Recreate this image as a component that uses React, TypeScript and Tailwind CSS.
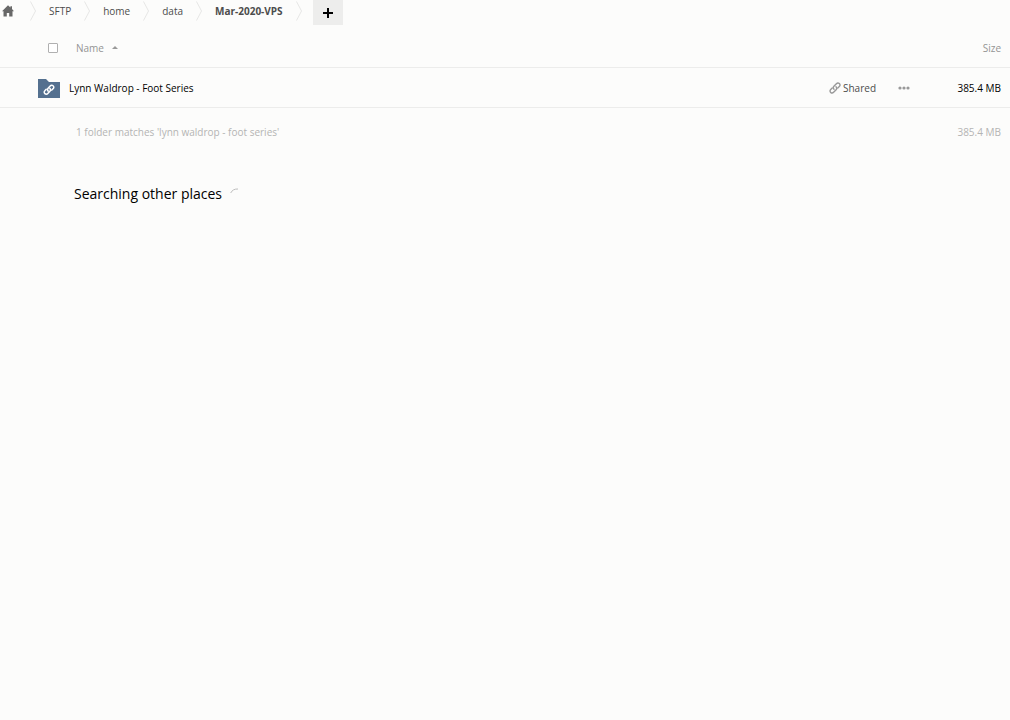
const crumbs = ["SFTP", "home", "data", "Mar-2020-VPS"];

function Chevron() {
  return (
    <svg
      aria-hidden="true"
      viewBox="0 0 6 20"
      className="h-5 w-1.5 shrink-0"
      fill="none"
      stroke="#e6e6e5"
      strokeWidth="1"
    >
      <path d="M0.5 0.5 L5.5 10 L0.5 19.5" />
    </svg>
  );
}

function HomeIcon() {
  return (
    <svg aria-hidden="true" viewBox="0 0 12 12" className="size-3" fill="#686868">
      <path d="M6 0.3 L8.4 2.6 V1.2 H10 V4.1 L12 6.2 H10.5 V11.4 H7.2 V8 H4.8 V11.4 H1.5 V6.2 H0 Z" />
    </svg>
  );
}

function LinkShape({ className }: { className: string }) {
  return (
    <svg
      aria-hidden="true"
      viewBox="0 0 12 12"
      className={className}
      fill="none"
      stroke="currentColor"
      strokeWidth="1.4"
      strokeLinecap="round"
    >
      <path d="M5 7.3 C4.1 6.4 4.1 5.2 4.9 4.3 L7.4 1.7 C8.3 0.8 9.5 0.8 10.3 1.6 C11.2 2.5 11.2 3.7 10.3 4.6 L8.8 6.1" />
      <path d="M7 4.7 C7.9 5.6 7.9 6.8 7.1 7.7 L4.6 10.3 C3.7 11.2 2.5 11.2 1.7 10.4 C0.8 9.5 0.8 8.3 1.7 7.4 L3.2 5.9" />
    </svg>
  );
}

function SharedFolderIcon() {
  return (
    <svg aria-hidden="true" viewBox="0 0 22 19" className="h-[19px] w-[22px] shrink-0">
      <path d="M0 0 H8 L11 3 H22 V19 H0 Z" fill="#54708f" />
      <g fill="none" stroke="#ffffff" strokeWidth="1.5" strokeLinecap="round">
        <path d="M10.2 12.1 C9.3 11.2 9.3 10.1 10.1 9.2 L12.2 6.9 C13 6 14.3 6 15.1 6.8 C16 7.6 16 8.8 15.2 9.6 L13.8 11.1" />
        <path d="M11.8 9.3 C12.7 10.2 12.7 11.3 11.9 12.2 L9.8 14.5 C9 15.4 7.7 15.4 6.9 14.6 C6 13.8 6 12.6 6.8 11.8 L8.2 10.3" />
      </g>
    </svg>
  );
}

export default function App() {
  return (
    <main className="min-h-screen bg-[#fcfcfb] font-['Open_Sans',sans-serif] text-[10px] leading-4 text-black">
      <nav aria-label="Breadcrumb" className="flex items-start">
        <ol className="flex h-[22px] items-center">
          <li className="flex items-center gap-4 pl-0.5">
            <a href="#home" aria-label="Home">
              <HomeIcon />
            </a>
            <Chevron />
          </li>
          {crumbs.map((crumb, i) => (
            <li key={crumb} className="flex items-center gap-[13px] pl-[13px]">
              <a
                href={`#${crumb}`}
                className={i === crumbs.length - 1 ? "font-bold text-[#4c4c4c]" : "text-[#4c4c4c]"}
              >
                {crumb}
              </a>
              <Chevron />
            </li>
          ))}
        </ol>
        <button
          type="button"
          aria-label="New"
          className="ml-[11px] flex h-[25px] w-[30px] items-center justify-center bg-[#ededec]"
        >
          <svg aria-hidden="true" viewBox="0 0 10 10" className="size-2.5" stroke="#000000" strokeWidth="2">
            <path d="M5 0 V10 M0 5 H10" />
          </svg>
        </button>
      </nav>

      <table className="w-full border-collapse">
        <thead>
          <tr className="h-[42px] border-b border-[#ececeb] text-[#949494]">
            <th scope="col" className="px-0 pt-1 pb-0 text-left font-normal">
              <div className="flex items-center pl-12">
                <input
                  type="checkbox"
                  aria-label="Select all"
                  className="mr-[18px] size-2.5 appearance-none rounded-[1px] border border-[#b0b0b0] bg-white checked:bg-[#54708f]"
                />
                <button type="button" className="flex items-center gap-2">
                  Name
                  <svg aria-hidden="true" viewBox="0 0 6 3" className="h-[3px] w-1.5" fill="#999999">
                    <path d="M0 3 L3 0 L6 3 Z" />
                  </svg>
                </button>
              </div>
            </th>
            <th scope="col" aria-label="Actions" className="w-[101px] p-0" />
            <th scope="col" className="w-[80px] pt-1 pr-[9px] pb-0 pl-0 text-right font-normal">
              Size
            </th>
          </tr>
        </thead>
        <tbody>
          <tr className="h-10 border-b border-[#ececeb]">
            <td className="px-0 pt-0.5 pb-0">
              <a href="#folder" className="flex items-center gap-[9px] pl-[38px]">
                <SharedFolderIcon />
                Lynn Waldrop - Foot Series
              </a>
            </td>
            <td className="px-0 pt-0.5 pb-0">
              <div className="flex items-center justify-between pr-5">
                <button type="button" className="flex items-center gap-0.5 text-[#4c4c4c]">
                  <LinkShape className="size-3 text-[#999999]" />
                  Shared
                </button>
                <button type="button" aria-label="More actions">
                  <svg aria-hidden="true" viewBox="0 0 12 4" className="h-1 w-3" fill="#999999">
                    <circle cx="2" cy="2" r="1.6" />
                    <circle cx="6" cy="2" r="1.6" />
                    <circle cx="10" cy="2" r="1.6" />
                  </svg>
                </button>
              </div>
            </td>
            <td className="pt-0.5 pr-[9px] pb-0 pl-0 text-right">385.4 MB</td>
          </tr>
        </tbody>
        <tfoot>
          <tr className="h-[50px] text-[#b4b4b3]">
            <td className="p-0 pl-[76px]">1 folder matches 'lynn waldrop - foot series'</td>
            <td className="p-0" />
            <td className="p-0 pr-[9px] text-right">385.4 MB</td>
          </tr>
        </tfoot>
      </table>

      <section className="flex gap-2 pt-[25px] pl-[74px]">
        <h2 className="text-[14px] leading-6">Searching other places</h2>
        <svg
          aria-hidden="true"
          viewBox="0 0 18 18"
          className="mt-1.5 size-[18px]"
          fill="none"
          stroke="#bdbdbd"
          strokeWidth="1"
        >
          <path d="M0.7 5 C2 2.2 4.5 0.8 8 1" />
        </svg>
      </section>
    </main>
  );
}
